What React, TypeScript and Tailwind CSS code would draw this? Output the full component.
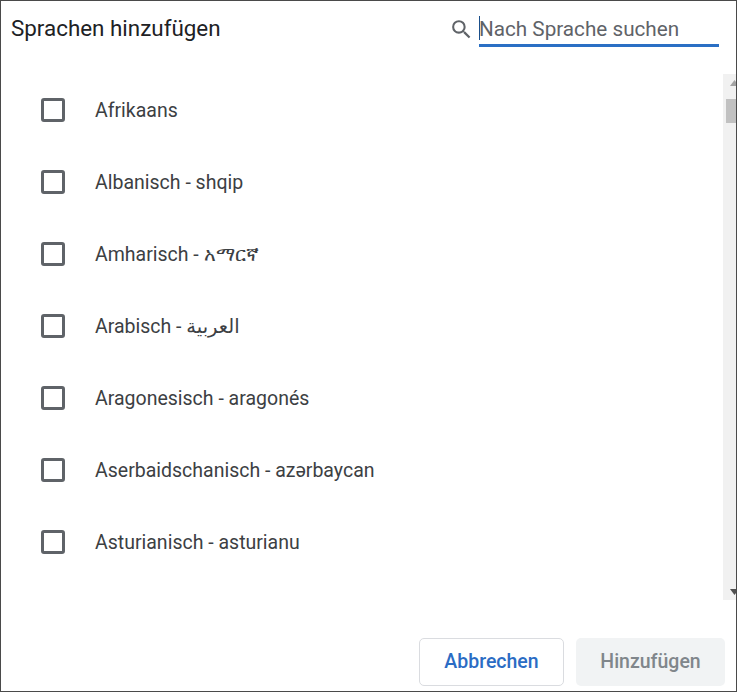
const languages = [
  "Afrikaans",
  "Albanisch - shqip",
  "Amharisch - አማርኛ",
  "Arabisch - العربية",
  "Aragonesisch - aragonés",
  "Aserbaidschanisch - azərbaycan",
  "Asturianisch - asturianu",
];

function LanguageRow({ label }: { readonly label: string }) {
  return (
    <div className="flex h-[72px] shrink-0 items-center pl-10">
      <span className="h-6 w-6 rounded-[3px] border-[3px] border-[#5f6368] bg-white" />
      <span className="ml-[30px] pt-px text-[19.5px] text-[#3c4043]">{label}</span>
    </div>
  );
}

function Scrollbar() {
  return (
    <div className="flex w-[13px] shrink-0 flex-col items-end bg-[#f1f1f1]">
      <div className="flex h-[25px] w-full items-center justify-end overflow-hidden pb-2">
        <svg width="6" height="6" viewBox="0 0 6 6">
          <path d="M4.5 0 9 6H0z" fill="#a3a3a3" />
        </svg>
      </div>
      <div className="h-6 w-2.5 bg-[#c1c1c1]" />
      <div className="flex-1" />
      <div className="flex h-[25px] w-full items-center justify-end overflow-hidden pt-2">
        <svg width="6" height="6" viewBox="0 0 6 6">
          <path d="M0 0h9L4.5 6z" fill="#505050" />
        </svg>
      </div>
    </div>
  );
}

export default function App() {
  return (
    <div className="flex h-[692px] w-[737px] flex-col overflow-hidden border border-[#4a4a4a] bg-white font-['Roboto','DejaVu_Sans','Noto_Sans',sans-serif]">
      <header className="flex h-[73px] shrink-0 items-start justify-between pr-[17px] pt-[11px]">
        <h1 className="-mt-px pl-2.5 text-[22.4px] leading-[34px] text-[#202124]">Sprachen hinzufügen</h1>
        <div className="flex items-start">
          <svg className="mr-[5px] mt-[5px]" width="25" height="25" viewBox="0 0 24 24" fill="#5f6368">
            <path d="M15.5 14h-.79l-.28-.27A6.47 6.47 0 0 0 16 9.5 6.5 6.5 0 1 0 9.5 16c1.61 0 3.09-.59 4.23-1.57l.27.28v.79l5 4.99L20.49 19l-4.99-5zm-6 0C7.01 14 5 11.99 5 9.5S7.01 5 9.5 5 14 7.01 14 9.5 11.99 14 9.5 14z" />
          </svg>
          <div className="relative h-[35px] w-60 border-b-[3px] border-[#2a6fc4] text-[20.7px] leading-[34px] text-[#5f6368]">
            <span className="absolute left-0 top-1 h-6 w-px bg-[#1a4f8b]" />
            Nach Sprache suchen
          </div>
        </div>
      </header>
      <div className="flex h-[526px] shrink-0">
        <div className="flex-1 overflow-hidden">
          {languages.map((label) => (
            <LanguageRow key={label} label={label} />
          ))}
        </div>
        <Scrollbar />
      </div>
      <footer className="flex flex-1 items-end justify-end gap-3 pb-[5px] pr-[11px]">
        <button
          type="button"
          className="h-12 w-[145px] rounded-[5px] border border-[#dadce0] bg-white text-[19.5px] font-medium text-[#2b6cc4]"
        >
          Abbrechen
        </button>
        <button
          type="button"
          className="h-12 w-[149px] rounded-[5px] bg-[#f1f3f4] text-[19.5px] font-medium text-[#80868b]"
        >
          Hinzufügen
        </button>
      </footer>
    </div>
  );
}
